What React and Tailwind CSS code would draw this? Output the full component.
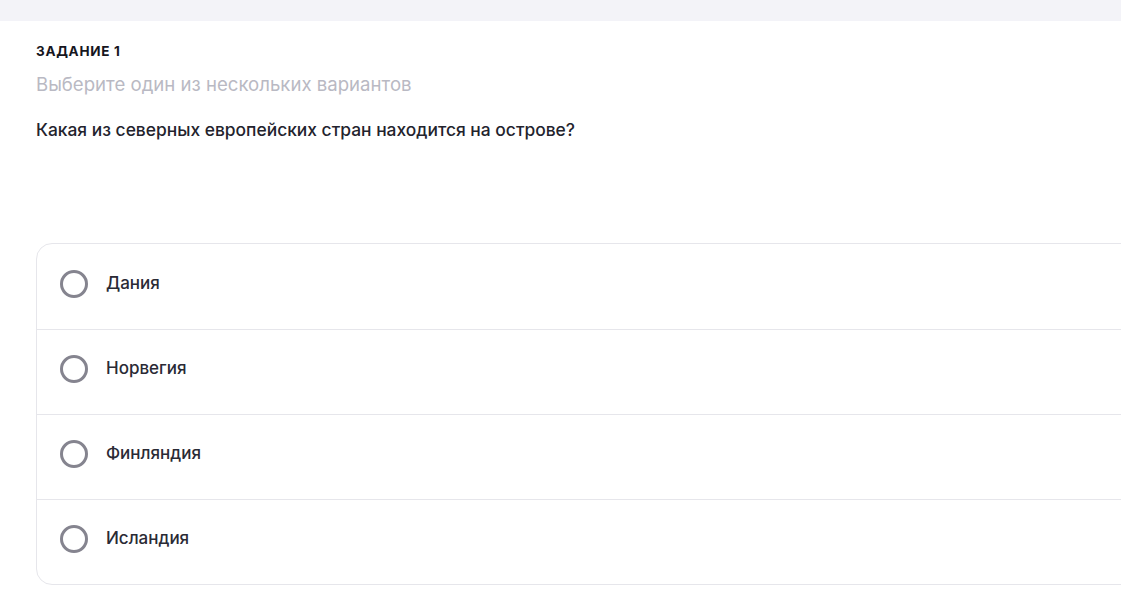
import React from "react";

const options = ["Дания", "Норвегия", "Финляндия", "Исландия"];

export default function App() {
  return (
    <div className="min-h-[596px] bg-white font-['Inter',sans-serif] overflow-hidden">
      <div className="h-[21px] bg-[#f3f3f8]" />
      <div className="pl-[36px]">
        <div className="pt-[22px] text-[13.5px] font-bold leading-[16px] text-[#16161e] tracking-[0.7px]">ЗАДАНИЕ 1</div>
        <div className="mt-[14px] text-[18.6px] leading-[22px] text-[#b9b9c3]">Выберите один из нескольких вариантов</div>
        <div className="mt-[24px] text-[17.4px] font-medium leading-[22px] text-[#23232d]">Какая из северных европейских стран находится на острове?</div>
        <div className="mt-[102px] w-[1120px] rounded-2xl border border-[#e6e6eb] bg-white">
          {options.map((o, i) => (
            <div
              key={o}
              className={`flex h-[85px] items-center gap-[18px] pb-[6px] pl-[23px] ${i > 0 ? "border-t border-[#e6e6eb]" : ""}`}
            >
              <div className="h-[28px] w-[28px] rounded-full border-[3px] border-[#85848f]" />
              <span className="text-[17px] font-medium text-[#2a2a35]">{o}</span>
            </div>
          ))}
        </div>
      </div>
    </div>
  );
}
